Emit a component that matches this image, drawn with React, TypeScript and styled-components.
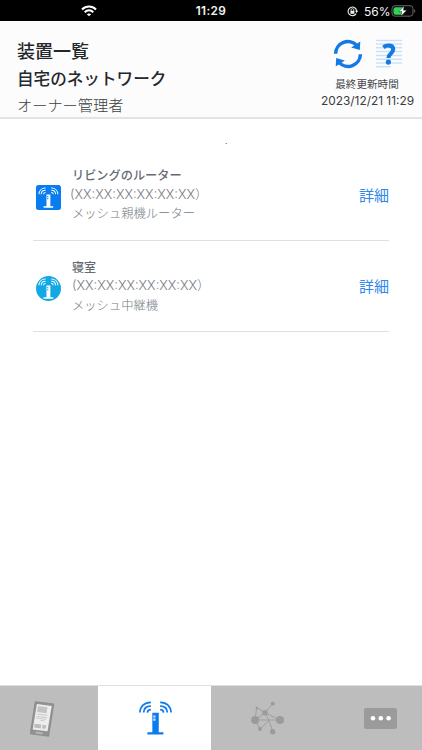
import React from "react";
import styled, { createGlobalStyle } from "styled-components";

const Global = createGlobalStyle`
  * { box-sizing: border-box; }
  body { margin: 0; background: #fff; font-family: Inter, "Noto Sans CJK JP", sans-serif; }
  svg { display: block; flex: none; }
`;

const Screen = styled.div`
  width: 422px;
  height: 750px;
  display: flex;
  flex-direction: column;
  overflow: hidden;
  background: #fff;
`;

const StatusBar = styled.div`
  height: 21px;
  flex: none;
  display: grid;
  grid-template-columns: 1fr 60px 1fr;
  align-items: center;
  background: #000;
  color: #f4f4f4;
`;

const StatusLeft = styled.div`
  padding-left: 81px;
`;

const Clock = styled.div`
  text-align: center;
  padding-top: 1px;
  font-size: 11.8px;
  font-weight: 600;
  line-height: 21px;
  letter-spacing: 0.4px;
`;

const StatusRight = styled.div`
  display: flex;
  align-items: center;
  justify-content: flex-end;
  padding-right: 6px;
`;

const Percent = styled.span`
  width: 27px;
  margin-left: 6px;
  font-size: 12px;
  line-height: 21px;
  white-space: nowrap;
`;

const Header = styled.header`
  height: 98px;
  flex: none;
  display: flex;
  justify-content: space-between;
  padding-left: 17px;
  padding-right: 5px;
  background: #fcfcfc;
  border-bottom: 2px solid #e3e3e3;
`;

const Line = styled.div<{ $size: number; $height: number; $weight?: number; $color?: string; $indent?: number }>`
  height: ${(p) => p.$height}px;
  line-height: ${(p) => p.$height}px;
  font-size: ${(p) => p.$size}px;
  font-weight: ${(p) => p.$weight ?? 400};
  color: ${(p) => p.$color ?? "#24272c"};
  margin-left: ${(p) => p.$indent ?? 0}px;
  white-space: nowrap;
`;

const Titles = styled.div`
  padding-top: 17px;
`;

const Actions = styled.div`
  width: 100px;
  display: flex;
  flex-direction: column;
  align-items: center;
  padding-top: 17px;
`;

const ActionIcons = styled.div`
  display: flex;
  gap: 13px;
  height: 38px;
`;

const Main = styled.main`
  flex: 1;
  padding: 18px 33px 0;
`;

const Mark = styled.div`
  height: 13px;
  padding-left: 192px;
  font-size: 8px;
  line-height: 8px;
  color: #333;
`;

const DeviceRow = styled.section`
  height: 91px;
  display: grid;
  grid-template-columns: 37px 1fr auto;
  align-items: end;
  border-bottom: 1px solid #dedfe1;
`;

const DeviceIcon = styled.div`
  padding: 0 0 30px 3px;
`;

const DeviceText = styled.div<{ $bottom: number }>`
  padding-bottom: ${(p) => p.$bottom}px;
`;

const Detail = styled.a`
  height: 20px;
  margin-bottom: 34px;
  font-size: 15px;
  line-height: 20px;
  color: #3287ea;
`;

const TabBar = styled.nav`
  height: 65px;
  flex: none;
  display: grid;
  grid-template-columns: 98px 113px 113px 98px;
  border-top: 1px solid #dfdfdf;
`;

const Tab = styled.div<{ $active?: boolean; $left: number; $top: number }>`
  padding: ${(p) => p.$top}px 0 0 ${(p) => p.$left}px;
  background: ${(p) => (p.$active ? "#fff" : "#bdbdbd")};
`;

const WifiIcon = () => (
  <svg width="16" height="12" viewBox="0 0 16 12" fill="none" stroke="#fff" strokeWidth="2.1">
    <path d="M1 4.4C5 .5 11 .5 15 4.4" />
    <path d="M3.7 7.2c2.5-2.4 6.1-2.4 8.6 0" />
    <path d="M8 11.3 5.8 9.2c1.2-1 3.2-1 4.4 0Z" fill="#fff" stroke="none" />
  </svg>
);

const LockIcon = () => (
  <svg width="11" height="11" viewBox="0 0 11 11" fill="none" stroke="#eee">
    <path d="M9.1 7.6A4.3 4.3 0 1 1 9.7 5" strokeWidth="1.1" />
    <path d="M8 4.8h3.2L9.6 7Z" fill="#eee" stroke="none" />
    <rect x="3.4" y="4.8" width="4" height="3" fill="#eee" stroke="none" />
    <path d="M4.1 5V3.9a1.3 1.3 0 0 1 2.6 0V5" strokeWidth=".8" />
  </svg>
);

const BatteryIcon = () => (
  <svg width="25" height="12" viewBox="0 0 25 12">
    <rect x="1" y=".7" width="21" height="10.5" rx="3" fill="#080808" stroke="#666" />
    <path d="M4.5 2.2h7.8v7.5H4.5a2 2 0 0 1-2-2V4.2a2 2 0 0 1 2-2Z" fill="#32d158" />
    <path d="M13.2 1.1 7.8 6.6h3.1l-1 4.5 6-5.9h-3.5Z" fill="#fff" stroke="#000" strokeWidth=".4" />
    <path d="M23.3 4c1.3.5 1.3 3.4 0 4Z" fill="#777" />
  </svg>
);

const RefreshIcon = () => (
  <svg width="30" height="32" viewBox="0 0 30 32" fill="none" stroke="#1479e4" strokeWidth="3.5">
    <path d="M2.6 15.8A12.3 12.3 0 0 1 24 7.6" />
    <path d="M27.4 16.2A12.3 12.3 0 0 1 6 24.4" />
    <path d="m27.3 3.5-.5 8.5-8.6-2.6Z" fill="#1479e4" stroke="none" />
    <path d="m2.7 28.5.5-8.5 8.6 2.6Z" fill="#1479e4" stroke="none" />
  </svg>
);

const HelpIcon = () => (
  <svg width="26" height="32" viewBox="0 0 26 32" fill="none">
    <path d="M0 2.4h26M0 6.1h26M0 9.8h26M0 13.5h26M0 17.4h26M0 21.3h26M0 25h26M0 28.8h15" stroke="#c9e1f8" strokeWidth="1.5" />
    <path d="M7.4 9.3C10.5 6.8 17.2 6.6 17.2 11.3c0 4.3-4.7 4-4.7 8.7" stroke="#1479e4" strokeWidth="4.1" />
    <circle cx="12.4" cy="24.1" r="2.6" fill="#1479e4" />
  </svg>
);

const RouterGlyph = ({ color, cutout }: { color: string; cutout: string }) => (
  <g fill="none" stroke={color}>
    <path d="M.2 11C.4 4.8 4.8.5 11.3.6M4 11c.2-4.2 3-6.7 7.3-6.6M7.8 11c.2-2 1.4-3 3.5-3" strokeWidth="1.7" />
    <path d="M31.8 11C31.6 4.8 27.2.5 20.7.6M28 11c-.2-4.2-3-6.7-7.3-6.6M24.2 11c-.2-2-1.4-3-3.5-3" strokeWidth="1.7" />
    <path d="M12.8 11.2h6.5V31H24v2.3H7.8V31h5Z" fill={color} stroke="none" />
    <path d="M13.7 13.9H16v2.1h-2.3ZM13.7 17.1H16v2.1h-2.3Z" fill={cutout} stroke="none" opacity=".8" />
  </g>
);

const RouterBadge = ({ round }: { round?: boolean }) => {
  const color = round ? "#12a8e4" : "#087df0";
  return (
    <svg width="25" height="25" viewBox="0 0 25 25">
      <rect width="25" height="25" rx={round ? 12.5 : 2.5} fill={color} />
      <g transform="translate(2.8 2.7) scale(.6)">
        <RouterGlyph color="#fff" cutout={color} />
      </g>
    </svg>
  );
};

const TabletIcon = () => (
  <svg width="25" height="36" viewBox="0 0 25 36">
    <path d="M5.2.7 23.8 2.9 18.7 35.3.2 32.8Z" fill="#929292" stroke="#858585" strokeWidth=".7" strokeLinejoin="round" />
    <path d="M6.9 3.1 21.7 5 17.5 30.3 2.7 28.4Z" fill="#ededed" />
    <path d="m8 5 9.5 1.2-1 6L7 11Z" fill="#c4c4c4" />
    <path d="m6.8 13 10.5 1.4M6.5 15.3 17 16.7m-6.5 2.7 4 .5M6 17l10 1.3" stroke="#bbb" strokeWidth=".7" />
    <path d="m4.7 22.8 6.6.8-.6 3.8-6.6-.8Zm8 1 3.5.5-.6 3.5-3.5-.4Z" fill="#bcbcbc" />
    <path d="m6 30.6 7 .9-.4 2-7-1Z" fill="#b5b5b5" />
  </svg>
);

const NetworkIcon = () => (
  <svg width="34" height="34" viewBox="0 0 34 34" fill="#9b9b9b">
    <path d="M21.7 2.7 14 11.7 4 19H29L14 11.7 5.7 6.7 4 19 9 28 18 19.5 14 11.7M18 19.5l3.7 11.2" fill="none" stroke="#9b9b9b" strokeWidth=".9" />
    <circle cx="21.7" cy="2.7" r="2" />
    <circle cx="5.7" cy="6.7" r="1.2" />
    <circle cx="14" cy="11.7" r="2.7" />
    <circle cx="4.1" cy="19" r="4" />
    <circle cx="29" cy="19" r="4.1" />
    <circle cx="9" cy="28" r="1.9" />
    <circle cx="21.7" cy="30.7" r="2.7" />
  </svg>
);

const MoreIcon = () => (
  <svg width="33" height="21" viewBox="0 0 33 21" fill="#fff">
    <rect width="33" height="21" rx="2" fill="#9b9b9b" />
    <circle cx="9" cy="10.3" r="2.3" />
    <circle cx="16.8" cy="10.3" r="2.3" />
    <circle cx="24.6" cy="10.3" r="2.3" />
  </svg>
);

export default function App() {
  return (
    <Screen>
      <Global />
      <StatusBar>
        <StatusLeft><WifiIcon /></StatusLeft>
        <Clock>11:29</Clock>
        <StatusRight>
          <LockIcon />
          <Percent>56%</Percent>
          <BatteryIcon />
        </StatusRight>
      </StatusBar>
      <Header>
        <Titles>
          <Line $size={18} $height={28} $weight={500}>装置一覧</Line>
          <Line $size={16.6} $height={26} $weight={500}>自宅のネットワーク</Line>
          <Line $size={15.2} $height={27} $weight={300} $color="#3b3e43">オーナー管理者</Line>
        </Titles>
        <Actions>
          <ActionIcons><RefreshIcon /><HelpIcon /></ActionIcons>
          <Line $size={10.6} $height={17} $color="#45484c">最終更新時間</Line>
          <Line $size={11.9} $height={15} $color="#393c40" $indent={1}>2023/12/21 11:29</Line>
        </Actions>
      </Header>
      <Main>
        <Mark>.</Mark>
        <DeviceRow>
          <DeviceIcon><RouterBadge /></DeviceIcon>
          <DeviceText $bottom={17}>
            <Line $size={12.2} $height={18} $weight={500} $color="#666b73" $indent={2}>リビングのルーター</Line>
            <Line $size={12.9} $height={20} $weight={300} $color="#777b82">(XX:XX:XX:XX:XX:XX）</Line>
            <Line $size={12.3} $height={18} $weight={300} $color="#747a82" $indent={2}>メッシュ親機ルーター</Line>
          </DeviceText>
          <Detail>詳細</Detail>
        </DeviceRow>
        <DeviceRow>
          <DeviceIcon><RouterBadge round /></DeviceIcon>
          <DeviceText $bottom={15}>
            <Line $size={12} $height={17} $weight={500} $color="#666b73" $indent={2}>寝室</Line>
            <Line $size={12.9} $height={20} $weight={300} $color="#777b82" $indent={2}>(XX:XX:XX:XX:XX:XX）</Line>
            <Line $size={12.3} $height={20} $weight={300} $color="#747a82" $indent={2}>メッシュ中継機</Line>
          </DeviceText>
          <Detail>詳細</Detail>
        </DeviceRow>
      </Main>
      <TabBar>
        <Tab $left={30} $top={15}><TabletIcon /></Tab>
        <Tab $active $left={41} $top={15}>
          <svg width="33" height="35" viewBox="-.7 -.5 33.4 35"><RouterGlyph color="#0b7bef" cutout="#fff" /></svg>
        </Tab>
        <Tab $left={40} $top={15}><NetworkIcon /></Tab>
        <Tab $left={40} $top={22}><MoreIcon /></Tab>
      </TabBar>
    </Screen>
  );
}
